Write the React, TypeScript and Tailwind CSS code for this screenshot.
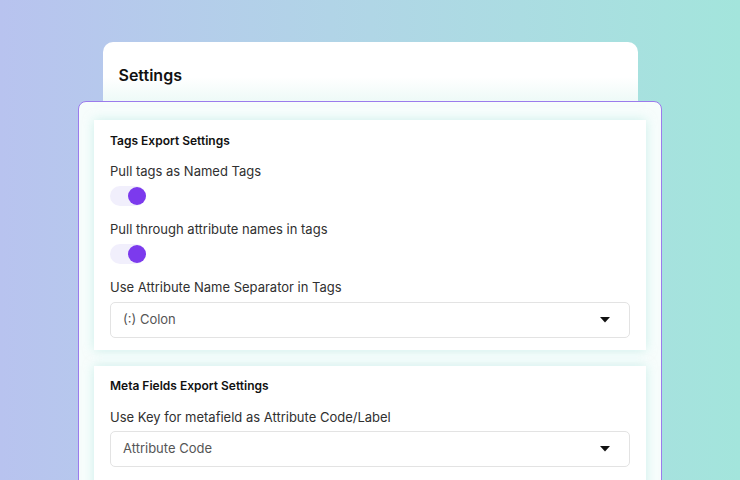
import React from "react";

function Toggle() {
  return (
    <div className="relative h-[20px] w-[36px] rounded-full bg-[#f1effc]">
      <div className="absolute right-0 top-px h-[18px] w-[18px] rounded-full bg-[#7c3aed]" />
    </div>
  );
}

function Select({ value }: { value: string }) {
  return (
    <div className="flex h-[36px] w-full items-center justify-between rounded-[5px] border border-[#e3e3e3] bg-white pl-[12px] pr-[19px]">
      <span className="text-[13px] text-[#555]">{value}</span>
      <svg width="10" height="6" viewBox="0 0 10 6">
        <path d="M0 0 L10 0 L5 5.5 Z" fill="#111" />
      </svg>
    </div>
  );
}

export default function App() {
  return (
    <div
      className="h-[480px] w-[740px] overflow-hidden bg-gradient-to-r from-[#b8c3ef] via-[#b0d6e6] to-[#a3e5dc] pt-[42px]"
      style={{ fontFamily: "Inter, 'Noto Sans', sans-serif" }}
    >
      <div className="mx-auto h-[70px] w-[535px] rounded-[10px] bg-gradient-to-b from-white via-white to-[#e6f8f4] px-[16px] pt-[22px]">
        <h1 className="text-[16px] font-semibold leading-[22px] text-[#111]">Settings</h1>
      </div>
      <div className="relative mx-auto -mt-[11px] w-[584px] rounded-[8px] border border-[#9b7bec] bg-[#f7fdfc] px-[15px] pb-[40px] pt-[18px]">
        <div className="flex flex-col gap-[16px]">
          <div className="bg-white px-[16px] pb-[12px] pt-[12px] shadow-[0_0_10px_rgba(170,230,222,0.55)]">
            <h2 className="text-[12px] font-semibold leading-[18px] text-[#111]">Tags Export Settings</h2>
            <div className="mt-[13px] text-[13px] leading-[16px] text-[#303030]">Pull tags as Named Tags</div>
            <div className="mt-[7px]"><Toggle /></div>
            <div className="mt-[15px] text-[13px] leading-[16px] text-[#303030]">Pull through attribute names in tags</div>
            <div className="mt-[7px]"><Toggle /></div>
            <div className="mt-[15px] text-[13px] leading-[16px] text-[#303030]">Use Attribute Name Separator in Tags</div>
            <div className="mt-[7px]"><Select value="(:) Colon" /></div>
          </div>
          <div className="bg-white px-[16px] pb-[40px] pt-[11px] shadow-[0_0_10px_rgba(170,230,222,0.55)]">
            <h2 className="text-[12px] font-semibold leading-[18px] text-[#111]">Meta Fields Export Settings</h2>
            <div className="mt-[14px] text-[13px] leading-[16px] text-[#303030]">Use Key for metafield as Attribute Code/Label</div>
            <div className="mt-[6px]"><Select value="Attribute Code" /></div>
          </div>
        </div>
      </div>
    </div>
  );
}
